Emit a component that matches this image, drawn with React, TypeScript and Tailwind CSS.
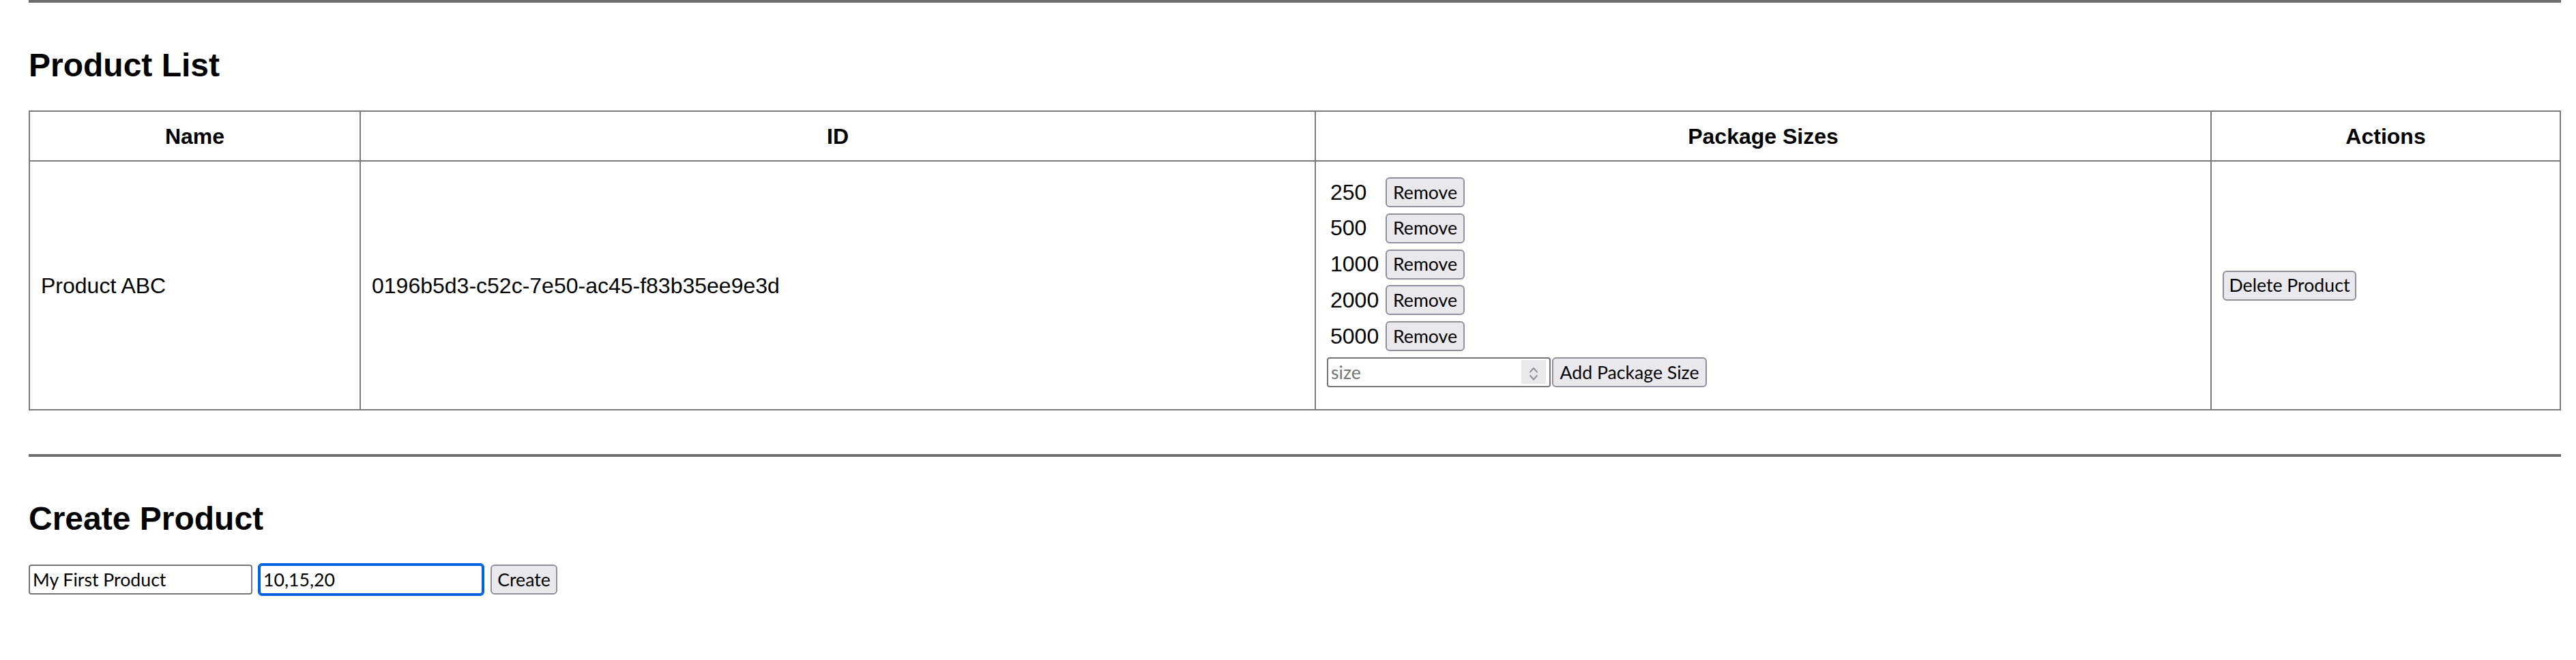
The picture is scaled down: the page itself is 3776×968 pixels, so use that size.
const sizes = [250, 500, 1000, 2000, 5000]

const btn =
    "h-[44px] shrink-0 rounded-[6px] border-2 border-[#8f8f9d] bg-[#e9e9ed] font-[Lato,sans-serif] text-[26.67px] leading-none text-black flex items-center justify-center"

const cell = "border-r-2 border-b-2 border-[#7a7a7a]"

function SpinBox() {
    return (
        <div className="w-[36px] h-[35px] shrink-0 bg-[#e9e9ed] mt-[-1px]">
            <svg width="36" height="35" viewBox="0 0 36 35" fill="none" stroke="#8f8f9d" strokeWidth="2" strokeLinecap="round" strokeLinejoin="round">
                <path d="M13 17.5 L18 12 L23 17.5" />
                <path d="M13 23 L18 28.5 L23 23" />
            </svg>
        </div>
    )
}

export default function App() {
    return (
        <div className="min-h-screen bg-white text-black font-['Liberation_Sans',Arial,sans-serif]">
            <div className="ml-[42px] w-[3712px]">
                <hr className="h-[4px] border-0 bg-[#6e6e6e]" />

                <h2 className="mt-[64px] text-[48px] leading-[55px] font-bold">Product List</h2>

                <table className="mt-[39px] w-[3712px] table-fixed border-separate border-spacing-0 border-l-2 border-t-2 border-[#7a7a7a] text-[32px]">
                    <thead>
                        <tr>
                            <th className={`${cell} w-[485px] h-[73px] p-0 text-center align-middle font-bold`}>Name</th>
                            <th className={`${cell} w-[1400px] h-[73px] p-0 text-center align-middle font-bold`}>ID</th>
                            <th className={`${cell} w-[1313px] h-[73px] p-0 text-center align-middle font-bold`}>Package Sizes</th>
                            <th className={`${cell} w-[512px] h-[73px] p-0 text-center align-middle font-bold`}>Actions</th>
                        </tr>
                    </thead>
                    <tbody>
                        <tr>
                            <td className={`${cell} h-[365px] px-[16px] align-middle`}>Product ABC</td>
                            <td className={`${cell} h-[365px] px-[16px] align-middle`}>0196b5d3-c52c-7e50-ac45-f83b35ee9e3d</td>
                            <td className={`${cell} h-[365px] px-[16px] pt-[23px] pb-0 align-top`}>
                                <div className="flex flex-col gap-[8.8px]">
                                    {sizes.map((s) => (
                                        <div key={s} className="flex items-center">
                                            <span className="w-[86px] pl-[5px] leading-[37px]">{s}</span>
                                            <button className={`${btn} w-[116px]`}>Remove</button>
                                        </div>
                                    ))}
                                    <div className="flex items-center gap-[2px]">
                                        <div className="flex items-center h-[44px] w-[328px] border-2 border-[#767676] rounded-[4px] pr-[5px]">
                                            <input
                                                type="text"
                                                placeholder="size"
                                                className="min-w-0 flex-1 h-full pl-[4px] bg-transparent outline-none font-[Lato,sans-serif] text-[26.67px] text-black placeholder:text-[#757575]"
                                            />
                                            <SpinBox />
                                        </div>
                                        <button className={`${btn} w-[227px]`}>Add Package Size</button>
                                    </div>
                                </div>
                            </td>
                            <td className={`${cell} h-[365px] px-[16px] align-middle`}>
                                <button className={`${btn} w-[196px]`}>Delete Product</button>
                            </td>
                        </tr>
                    </tbody>
                </table>

                <hr className="mt-[64px] h-[4px] border-0 bg-[#6e6e6e]" />

                <h2 className="mt-[63px] text-[48px] leading-[55px] font-bold">Create Product</h2>

                <div className="mt-[40px] flex items-center">
                    <input
                        type="text"
                        defaultValue="My First Product"
                        className="h-[44px] w-[328px] border-2 border-[#767676] rounded-[4px] px-[4px] outline-none font-[Lato,sans-serif] text-[26.67px] text-black"
                    />
                    <input
                        type="text"
                        defaultValue="10,15,20"
                        className="ml-[10px] h-[44px] w-[328px] border-2 border-[#0060df] rounded-[4px] px-[4px] outline-2 outline-[#0060df] font-[Lato,sans-serif] text-[26.67px] text-black"
                    />
                    <button className={`${btn} ml-[11px] w-[98px]`}>Create</button>
                </div>
            </div>
        </div>
    )
}
